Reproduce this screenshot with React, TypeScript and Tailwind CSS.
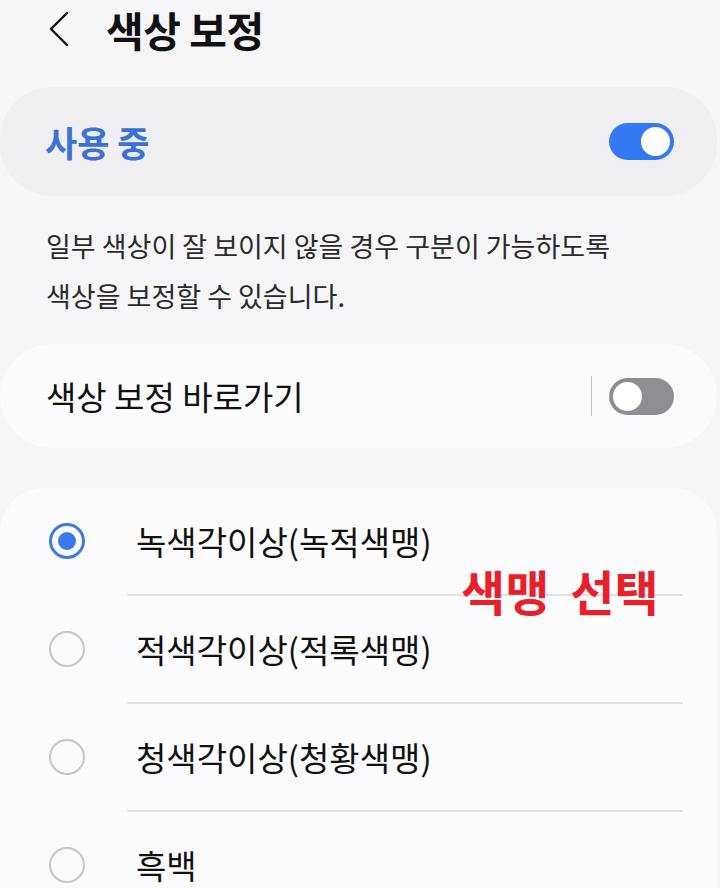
const FONT = { fontFamily: '"Noto Sans CJK KR", "Noto Sans", sans-serif' };

const OPTIONS = ['녹색각이상(녹적색맹)', '적색각이상(적록색맹)', '청색각이상(청황색맹)', '흑백'];

function Toggle({ on }: { on: boolean }) {
    return (
        <div
            className={
                on
                    ? 'flex h-[37px] w-[65px] items-center justify-end rounded-full bg-[#3479f4] p-[4px]'
                    : 'flex h-[37px] w-[65px] items-center justify-start rounded-full bg-[#8e8e93] p-[4px]'
            }
        >
            <div className="h-[29px] w-[29px] rounded-full bg-white" />
        </div>
    );
}

function Radio({ checked }: { checked: boolean }) {
    if (checked) {
        return (
            <div className="flex h-[36px] w-[36px] items-center justify-center rounded-full border-[3px] border-[#3b7ae8]">
                <div className="h-[18px] w-[18px] rounded-full bg-[#3b7ae8]" />
            </div>
        );
    }
    return <div className="h-[36px] w-[36px] rounded-full border-[2.5px] border-[#c6c6c6]" />;
}

export default function App() {
    return (
        <div className="relative h-[888px] w-[720px] overflow-hidden bg-[#f6f6f8] text-[#111]" style={FONT}>
            {/* Header */}
            <div className="flex h-[58px] items-center pl-[48px]">
                <svg width="22" height="36" viewBox="0 0 22 36" fill="none">
                    <path d="M19 2 L3 18 L19 34" stroke="#111" strokeWidth="2.4" strokeLinecap="round" strokeLinejoin="round" />
                </svg>
                <h1 className="ml-[36px] text-[41px] font-bold leading-none tracking-[-0.5px]">색상 보정</h1>
            </div>

            {/* Main switch */}
            <div className="mt-[29px] flex h-[109px] w-[717px] items-center justify-between rounded-[52px] bg-[#efeff1] pl-[45px] pr-[43px]">
                <span className="text-[35px] font-bold leading-none text-[#3a72d8]">사용 중</span>
                <Toggle on />
            </div>

            <p className="mt-[25px] pl-[46px] text-[27px] leading-[50px] text-[#2a2a2a]">
                일부 색상이 잘 보이지 않을 경우 구분이 가능하도록
                <br />
                색상을 보정할 수 있습니다.
            </p>

            {/* Shortcut */}
            <div className="mt-[23px] flex h-[104px] w-[717px] items-center rounded-[52px] bg-[#fcfcfe] pl-[46px] pr-[43px]">
                <span className="flex-1 text-[33px] leading-none">색상 보정 바로가기</span>
                <div className="mr-[17px] h-[40px] w-[1.5px] bg-[#c4c4c4]" />
                <Toggle on={false} />
            </div>

            {/* Options */}
            <div className="mt-[40px] w-[717px] rounded-t-[44px] bg-[#fcfcfe]">
                {OPTIONS.map((label, i) => (
                    <div key={label}>
                        <div className="flex h-[106px] items-center pl-[49px]">
                            <Radio checked={i === 0} />
                            <span className="ml-[51px] text-[33px] leading-none">{label}</span>
                        </div>
                        {i < OPTIONS.length - 1 && <div className="ml-[127px] h-[2px] w-[556px] bg-[#e3e3e5]" />}
                    </div>
                ))}
            </div>

            {/* Annotation */}
            <div className="absolute left-[461px] top-[566px] text-[48px] font-bold leading-none text-[#e8202a] [word-spacing:10px]">
                색맹 선택
            </div>
        </div>
    );
}
